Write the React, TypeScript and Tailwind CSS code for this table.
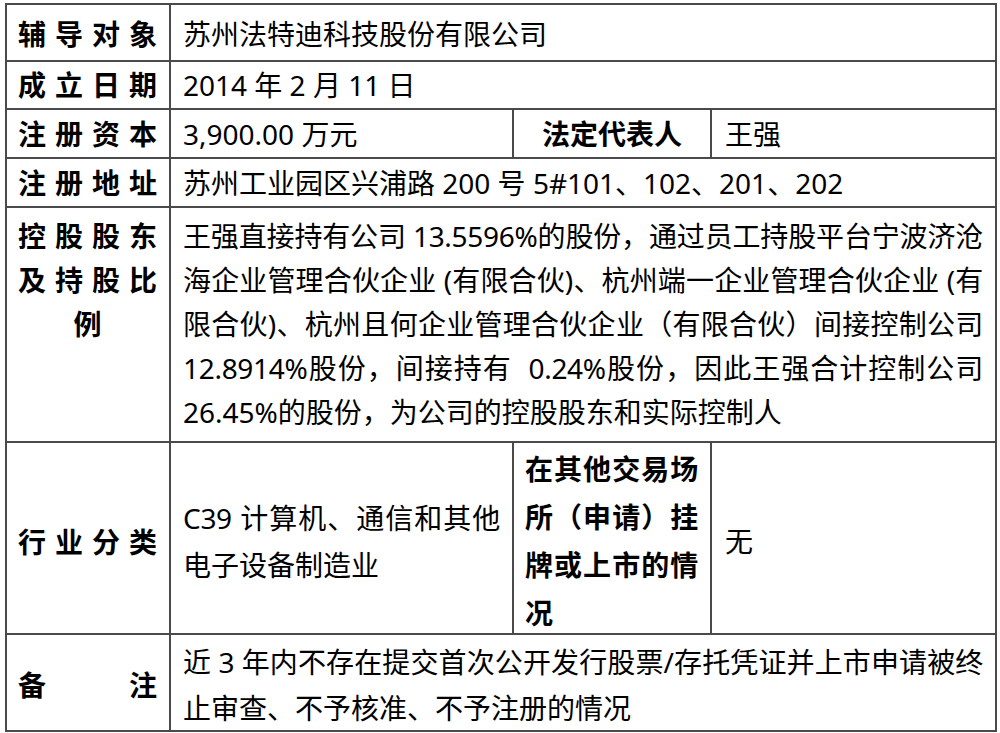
import React from 'react';

const cell = 'border-r-2 border-b-2 border-[#4a4a4a] flex';

function Label({ text }: { text: string }) {
  return (
    <div className="flex w-full justify-between font-bold">
      {text.split('').map((c, i) => (
        <span key={i}>{c}</span>
      ))}
    </div>
  );
}

// one justified line; tracking keeps tight lines from wrapping
function JLine({ children }: { children: React.ReactNode }) {
  return <div className="text-justify tracking-[-0.3px] [text-align-last:justify]">{children}</div>;
}

const holdingLines = [
  '王强直接持有公司 13.5596%的股份，通过员工持股平台宁波济沧',
  '海企业管理合伙企业 (有限合伙)、杭州端一企业管理合伙企业 (有',
  '限合伙)、杭州且何企业管理合伙企业（有限合伙）间接控制公司',
  '12.8914%股份，间接持有  0.24%股份，因此王强合计控制公司',
];

export default function App() {
  return (
    <div className="min-h-screen bg-white pl-[5px] pt-[3px]">
      <div className="grid w-[992px] grid-cols-[164px_343px_198px_285px] grid-rows-[57px_48px_49px_49px_235px_192px_97px] border-l-2 border-t-2 border-[#4a4a4a] text-[28px] text-black [font-family:'Noto_Sans','Noto_Sans_CJK_SC',sans-serif]">
        {/* 辅导对象 */}
        <div className={`${cell} items-center pl-[11px] pr-[12px] pt-[2px]`}>
          <Label text="辅导对象" />
        </div>
        <div className={`${cell} col-span-3 items-center px-[12px] pt-[2px]`}>苏州法特迪科技股份有限公司</div>

        {/* 成立日期 */}
        <div className={`${cell} items-center pl-[11px] pr-[12px]`}>
          <Label text="成立日期" />
        </div>
        <div className={`${cell} col-span-3 items-center px-[12px]`}>2014 年 2 月 11 日</div>

        {/* 注册资本 */}
        <div className={`${cell} items-center pl-[11px] pr-[12px]`}>
          <Label text="注册资本" />
        </div>
        <div className={`${cell} items-center px-[12px]`}>3,900.00 万元</div>
        <div className={`${cell} items-center justify-center font-bold`}>法定代表人</div>
        <div className={`${cell} items-center px-[13px]`}>王强</div>

        {/* 注册地址 */}
        <div className={`${cell} items-center pl-[11px] pr-[12px]`}>
          <Label text="注册地址" />
        </div>
        <div className={`${cell} col-span-3 items-center px-[12px]`}>
          苏州工业园区兴浦路 200 号 5#101、102、201、202
        </div>

        {/* 控股股东及持股比例 */}
        <div className={`${cell} flex-col pl-[11px] pr-[12px] pt-[6px] leading-[44px]`}>
          <Label text="控股股东" />
          <Label text="及持股比" />
          <div className="text-center font-bold">例</div>
        </div>
        <div className={`${cell} col-span-3 flex-col px-[12px] pt-[6px] leading-[44px] whitespace-pre-wrap`}>
          {holdingLines.map((l) => (
            <JLine key={l}>{l}</JLine>
          ))}
          <div>26.45%的股份，为公司的控股股东和实际控制人</div>
        </div>

        {/* 行业分类 */}
        <div className={`${cell} items-center pl-[11px] pr-[12px] pt-[8px]`}>
          <Label text="行业分类" />
        </div>
        <div className={`${cell} items-center px-[12px] pt-[8px] leading-[47px]`}>
          <div className="w-full">
            <JLine>C39 计算机、通信和其他</JLine>
            <div>电子设备制造业</div>
          </div>
        </div>
        <div className={`${cell} items-center pl-[11px] pr-[12px] pt-[6px] font-bold leading-[48px]`}>
          <div className="w-full">
            <JLine>在其他交易场</JLine>
            <JLine>所（申请）挂</JLine>
            <JLine>牌或上市的情</JLine>
            <div>况</div>
          </div>
        </div>
        <div className={`${cell} items-center px-[13px] pt-[5px]`}>无</div>

        {/* 备注 */}
        <div className={`${cell} items-center pl-[11px] pr-[12px] pt-[4px]`}>
          <Label text="备注" />
        </div>
        <div className={`${cell} col-span-3 items-center px-[12px] pt-[4px] leading-[46px]`}>
          <div className="w-full">
            <JLine>近 3 年内不存在提交首次公开发行股票/存托凭证并上市申请被终</JLine>
            <div>止审查、不予核准、不予注册的情况</div>
          </div>
        </div>
      </div>
    </div>
  );
}
